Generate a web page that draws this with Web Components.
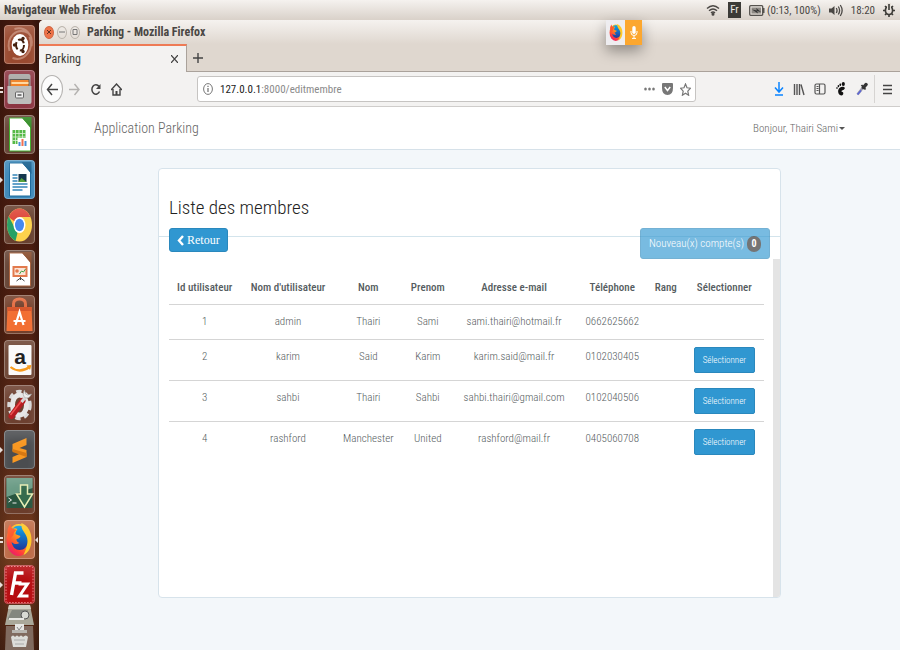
<!DOCTYPE html>
<html lang="fr">
<head>
<meta charset="utf-8">
<title>Parking</title>
<style>
  html, body { margin: 0; height: 100%; }
  body { font-family: "Roboto Condensed", Lato, "Liberation Sans", sans-serif; font-size: 11px; color: #636b6f; }
</style>
</head>
<body>
<desktop-shell>
  <top-panel slot="panel" app="Navigateur Web Firefox"></top-panel>
  <app-launcher slot="launcher"></app-launcher>
  <browser-window caption="Parking - Mozilla Firefox">
    <browser-tabs slot="chrome" label="Parking"></browser-tabs>
    <browser-toolbar slot="chrome"></browser-toolbar>
    <page-navbar brand="Application Parking">Bonjour, Thairi Sami</page-navbar>
    <page-card>
      <span slot="title">Liste des membres</span>
      <back-button slot="actions">Retour</back-button>
      <pending-button slot="actions" count="0">Nouveau(x) compte(s)</pending-button>
      <members-table></members-table>
    </page-card>
  </browser-window>
  <recording-badge slot="overlay"></recording-badge>
</desktop-shell>

<script>
const define = (name, html, setup) => customElements.define(name, class extends HTMLElement {
  connectedCallback() {
    if (this.shadowRoot) return;
    const root = this.attachShadow({ mode: 'open' });
    root.innerHTML = '<style>*{box-sizing:border-box}button{font:inherit;color:inherit;border:0;background:none;padding:0;margin:0;cursor:pointer}a{color:inherit;text-decoration:none}svg{display:block;flex:none}</style>' + html;
    if (setup) setup(this, root);
  }
});

const firefox = `
  <defs>
    <linearGradient id="fo" x1=".8" y1="0" x2=".2" y2="1"><stop offset="0" stop-color="#ffe226"/><stop offset=".4" stop-color="#ff9a1f"/><stop offset=".75" stop-color="#ff3d3a"/><stop offset="1" stop-color="#e5137a"/></linearGradient>
    <linearGradient id="fb" x1="0" y1="0" x2="0" y2="1"><stop offset="0" stop-color="#0aa5ea"/><stop offset="1" stop-color="#20389a"/></linearGradient>
  </defs>
  <ellipse cx="14" cy="20" rx="12" ry="16" fill="url(#fo)"/>
  <path d="M17 3c7 3 10 9 10 17 0 7-3 13-8 15 4-8 5-14 1-20-3-4-4-7-3-12z" fill="#ffc928"/>
  <path d="M8 9c2-3 5-4 9-3 0 5 6 8 6 15 0 6-3 9-8 9-4 0-7-3-8-8 2 2 5 3 8 1-3-1-3-3-3-4 2 0 3-1 4-3-2-1-4-1-5-2 0-2 1-4 2-5-2-1-3-1-5 0z" fill="url(#fb)"/>
  <path d="M3 11c0-3 2-6 3-7 0 3 1 4 3 5l3 1c-2 1-3 3-3 5l-5 6z" fill="#ff5a2e"/>`;

define('desktop-shell', `
  <style>
    :host { display: grid; grid-template: auto 1fr / auto 1fr; min-height: 100vh; position: relative; background: #43190d; }
    ::slotted([slot=panel]) { grid-column: 1 / -1; }
  </style>
  <slot name="panel"></slot><slot name="launcher"></slot><slot></slot><slot name="overlay"></slot>`);

define('top-panel', `
  <style>
    :host { display: flex; align-items: center; height: 20px; padding: 0 5px 0 4px; background: linear-gradient(#f5f2ef, #d9d1c9); color: #4a4744; font-size: 12px; }
    b { flex: 1; }
    .status { display: flex; align-items: center; gap: 8px; font-size: 11px; }
    .battery { display: flex; align-items: center; gap: 2px; }
    .lang { background: #3c3b37; color: #efebe6; width: 13px; height: 16px; line-height: 16px; text-align: center; }
  </style>
  <b></b>
  <div class="status">
    <svg width="14" height="12" viewBox="0 0 14 12" fill="none" stroke="#4a4744" stroke-width="1.400"><path d="M1 4.500Q7-1 13 4.500M3 6.800Q7 3 11 6.800M5 9Q7 7 9 9"/><circle cx="7" cy="10.300" r=".8" fill="#4a4744"/></svg>
    <span class="lang">Fr</span>
    <span class="battery">
      <svg width="16" height="11" viewBox="0 0 16 11"><rect x=".7" y=".7" width="13" height="9.600" rx="1" fill="none" stroke="#55524e" stroke-width="1.300"/><rect x="2.500" y="2.500" width="9.500" height="6" fill="#8d8984"/><path d="M14.500 3v5" stroke="#55524e" stroke-width="2"/><path d="M3 4.500l5 1-1-2.500 5 4-4-1 1 2.500z" fill="#333"/></svg>
      <span>(0:13, 100%)</span>
    </span>
    <svg width="14" height="13" viewBox="0 0 14 13" fill="none" stroke="#4a4744" stroke-width="1.300"><path d="M0 4.500h2.500L5.500 2v9l-3-2.500H0z" fill="#4a4744" stroke="none"/><path d="M7.300 4q1.500 2.500 0 5M9.300 2.500q2.600 4 0 8M11.300 1q3.700 5.500 0 11"/></svg>
    <span>18:20</span>
    <svg width="12" height="14" viewBox="0 0 12 14"><ellipse cx="6" cy="7.500" rx="3.600" ry="4" fill="none" stroke="#3c3b37" stroke-width="1.700"/><path d="M0 7.500h2M10 7.500h2M2 3l1.500 1.500M10 3L8.500 4.500M2 12l1.500-1.500M10 12l-1.500-1.500M6 11v3" stroke="#3c3b37" stroke-width="1.600"/><path d="M6 0v7" stroke="#e7e1da" stroke-width="4"/><path d="M6 1v6" stroke="#3c3b37" stroke-width="1.600"/></svg>
  </div>`, (el, r) => r.querySelector('b').textContent = el.getAttribute('app'));

const doc = (edge, fold) => `<path d="M5 3h13l8 9v24H5z" fill="#fff" stroke="${edge}" stroke-width="1"/><path d="M17 2h10v12z" fill="${fold}"/>`;
const apps = [
  ['Tableau de bord', '#9a4a30', `<path d="M5 26C1 12 12 2 24 8M25 12c5 13-5 25-17 21M10 4c11-3 19 6 17 17" fill="none" stroke="#d9a793" stroke-width="2" opacity=".6"/><ellipse cx="15.500" cy="20" rx="8.300" ry="11" fill="#fff"/><ellipse cx="15.500" cy="20" rx="4" ry="5.500" fill="none" stroke="#44200f" stroke-width="2" stroke-dasharray="7.500 2.500"/><circle cx="10" cy="20" r="1.700" fill="#44200f"/><circle cx="18.500" cy="13.500" r="1.700" fill="#44200f"/><circle cx="18.500" cy="26.500" r="1.700" fill="#44200f"/>`],
  ['Fichiers', '#8c3541', `<path d="M4 6q0-2 2-2h18q2 0 2 2v12H4z" fill="#a9a9a7"/><path d="M5 9h20v8H5z" fill="#59544f"/><path d="M6 10h18v6H6z" fill="#f08328"/><path d="M7 12h17v2H7z" fill="#ffd8a0"/><path d="M3 16h24v16q0 2-2 2H5q-2 0-2-2z" fill="#bdbdbb"/><rect x="11" y="22" width="8" height="6" rx="1" fill="#eee" stroke="#666"/><path d="M13 25h4" stroke="#555" stroke-width="1.500"/>`, 2],
  ['Calc', '#654334', doc('#3fae2a', '#2f8a22') + `<path d="M8 15h13v14H8z" fill="#56b947"/><path d="M8 18.500h13M8 22h13M8 25.500h13M11 15v14M14.500 15v14M18 15v14" stroke="#dff3d9" stroke-width=".8"/><path d="M13 23h10v8H13z" fill="#fff"/><path d="M14 31v-4h2v4z" fill="#4a90d9"/><path d="M17 31v-7h2v7z" fill="#f27052"/><path d="M20 31v-5h2v5z" fill="#4a90d9"/>`],
  ['Writer', '#3d88b8', doc('#1b6a9c', '#155e8d') + `<path d="M14 14h8v8h-8z" fill="#14374e"/><path d="M14 22l3-4 5 4z" fill="#57a33b"/><path d="M8 15h5M8 18h5M8 21h5M8 24h15M8 27h15M8 30h10" stroke="#3384b8" stroke-width="1.600"/>`, 1],
  ['Chrome', '#68402f', `<ellipse cx="15" cy="20" rx="12.500" ry="16.500" fill="#fdd24c"/><path d="M15 20L4 12Q8 3.500 15 3.500T26 12H15z" fill="#df4a3d"/><path d="M4 11l9 17-2 8Q2.500 31 2.500 20q0-5 1.500-9z" fill="#27a165"/><ellipse cx="15" cy="20" rx="6" ry="8" fill="#fff"/><ellipse cx="15" cy="20" rx="4.500" ry="6.200" fill="#4688ef"/>`],
  ['Impress', '#654334', doc('#a9623c', '#874b2b') + `<path d="M8 16h15v11H8z" fill="#e27a4d"/><path d="M10 18h11v7H10z" fill="#fbe5d8"/><circle cx="12.500" cy="21" r="1.800" fill="#e27a4d"/><path d="M15 24l2-3 2 1 2-3" stroke="#41a447" fill="none"/><path d="M16 27v3M12 31l4-3 4 3" stroke="#444" fill="none"/>`],
  ['Logithèque', '#73402c', `<path d="M9 13V9q0-5 6-5t6 5v4" fill="none" stroke="#e46b3f" stroke-width="3"/><path d="M3 12h24l1 24H2z" fill="#f26f33"/><path d="M3 12h24l.3 4H2.800z" fill="#d7552a"/><path d="M11 30l4-13 4 13M9 26h12" fill="none" stroke="#fff" stroke-width="2.200"/>`],
  ['Amazon', '#6d4433', `<rect x="4" y="5" width="23" height="30" rx="1" fill="#fafafa"/><text x="15.500" y="24" font-family="Liberation Sans, sans-serif" font-weight="700" font-size="21" fill="#222" text-anchor="middle">a</text><path d="M6 27q9 7 19 0" fill="none" stroke="#f79a1c" stroke-width="2.200"/><path d="M22 25.500l5-.5-1.500 5z" fill="#f79a1c"/>`],
  ['Paramètres', '#6d4030', `<ellipse cx="15" cy="20" rx="10" ry="13" fill="none" stroke="#d9d9d9" stroke-width="4.500" stroke-dasharray="5 3.500"/><ellipse cx="15" cy="20" rx="7" ry="10" fill="none" stroke="#e6e6e6" stroke-width="5"/><path d="M7 31l11-15" stroke="#b51d22" stroke-width="6" stroke-linecap="round"/><path d="M6 30l11-14" stroke="#ec5150" stroke-width="1.500"/><path d="M17 17l5-6" stroke="#d6d6d6" stroke-width="3"/><path d="M20 5q-3 5 1 8 4 1 6-4l-4 1-2-1z" fill="#eee" stroke="#999" stroke-width=".6"/>`],
  ['Sublime Text', '#4b4d50', `<path d="M8 14l14-6v7l-7 3 7 2v7L8 33v-6l7-3-7-3z" fill="#f89822"/><path d="M8 19l14 4v4l-14-5z" fill="#d67812"/>`, 1],
  ['Terminal', '#6b3d2b', `<path d="M2 3h26v30H2z" fill="#28553f"/><path d="M2 3h26v10L2 22z" fill="#6a9b85"/><path d="M16 10h7v9h5l-8 13-8-13h4z" fill="#356b4d" stroke="#e6edb4" stroke-width="1.500"/><path d="M4 23l3 2-3 2M8 28h4" fill="none" stroke="#eee"/>`],
  ['Firefox', '#bd6b47', firefox, 2, true],
  ['FileZilla', '#a90f12', `<rect x="1.500" y="1.500" width="27" height="36" rx="2" fill="#b60c10" stroke="#ef7d7d" stroke-width="1" stroke-dasharray="1.500 1.500"/><path d="M7 30l4-22h8M9 18h8" fill="none" stroke="#fff" stroke-width="3.400"/><path d="M14 19h9l-8 12h9" fill="none" stroke="#fff" stroke-width="3"/>`, 1]
];

define('launcher-item', `
  <style>
    :host { display: flex; align-items: center; height: 39px; width: 39px; }
    .mark { width: 4px; display: grid; gap: 2px; }
    .mark i { width: 3px; height: 2px; background: #e9e0dc; }
    .mark.one i { width: 0; height: 0; background: none; border: 3px solid transparent; border-left-color: #e9e0dc; border-right: 0; }
    button { position: relative; width: 31px; height: 39px; border-radius: 4px; overflow: hidden; }
    button::after { content: ""; position: absolute; inset: 0; border-radius: 4px; box-shadow: inset 0 0 0 1px #ffffff44, inset 0 8px 10px #ffffff22; }
    .active { border: 3px solid transparent; border-right-color: #e9e0dc; border-left: 0; }
  </style>
  <span class="mark"></span><button></button>`, (el, r) => {
    const [label, bg, art, marks = 0, active] = apps[+el.getAttribute('index')];
    const b = r.querySelector('button');
    b.setAttribute('aria-label', label);
    b.style.background = bg;
    b.innerHTML = `<svg width="31" height="39" viewBox="0 0 30 39" aria-hidden="true">${art}</svg>`;
    const m = r.querySelector('.mark');
    m.innerHTML = '<i></i>'.repeat(marks);
    if (marks === 1) m.classList.add('one');
    if (active) b.insertAdjacentHTML('afterend', '<i class="active"></i>');
  });

define('app-launcher', `
  <style>
    :host { display: block; width: 39px; height: calc(100vh - 20px); overflow: hidden; background: linear-gradient(90deg, #00000025, transparent 30%, transparent 80%, #00000040), linear-gradient(#42180e, #4d1e10 45%, #5b2a18 70%, #733c1e 85%, #4a2213); }
    .items { display: grid; gap: 6px; padding-top: 5px; }
    .stack { display: grid; padding: 0 0 0 4px; }
  </style>
  <div class="items"></div>
  <div class="stack">
    <svg width="31" height="46" viewBox="0 0 31 46"><path d="M5 1h21l4 20H1z" fill="#aaa89a"/><path d="M5 1h21l1 4H4z" fill="#d2d0c4"/><path d="M4 14L8 6h16l-2 9H4z" fill="#84877f"/><ellipse cx="21" cy="11" rx="4" ry="4" fill="#d8dad4" stroke="#555"/><path d="M5 15h15" stroke="#e8e8e4" stroke-width="2"/><path d="M2 22h27l1 24H1z" fill="#806a5f"/><path d="M11 20h9v9h-9z" fill="#e6e6e4"/><path d="M13 23l2 3 3-4" stroke="#888" fill="none"/><path d="M8 26h15v3H8z" fill="#b9b6b1"/><path d="M7 33q2-3 4 0 2-3 4 0 2-3 4 0 3-3 5 0l-2 10H9z" fill="#dcdcd9"/><path d="M10 36h11M11 40h9" stroke="#aaa"/></svg>
  </div>`, (el, r) => {
    r.querySelector('.items').innerHTML = apps.map((_, i) => `<launcher-item index="${i}"></launcher-item>`).join('');
  });

define('browser-window', `
  <style>
    :host { display: flex; flex-direction: column; min-width: 0; background: #f3f7fa; border-top-left-radius: 5px; overflow: hidden; }
    header { display: flex; align-items: center; gap: 3px; height: 24px; padding-left: 5px; background: linear-gradient(#f5f2ef, #dfd7cf); color: #4a4744; font-size: 12px; }
    b { padding-left: 4px; }
    button { width: 10px; height: 13px; border-radius: 50%; border: 1px solid #bab3ab; display: grid; place-items: center; color: #777; }
    .close { background: #ee7248; border-color: #cf6541; color: #63301f; }
    main { flex: 1; display: flex; flex-direction: column; }
  </style>
  <header>
    <button class="close" aria-label="Fermer"><svg width="6" height="6" viewBox="0 0 6 6" stroke="currentColor"><path d="M1 1l4 4M5 1L1 5"/></svg></button>
    <button aria-label="Réduire"><svg width="6" height="6" viewBox="0 0 6 6" stroke="currentColor"><path d="M0 3h6"/></svg></button>
    <button aria-label="Agrandir"><svg width="6" height="6" viewBox="0 0 6 6" stroke="currentColor" fill="none"><path d="M1 .5h4v5H1z"/></svg></button>
    <b></b>
  </header>
  <slot name="chrome"></slot>
  <main><slot></slot></main>`, (el, r) => r.querySelector('b').textContent = el.getAttribute('caption'));

define('browser-tabs', `
  <style>
    :host { display: flex; height: 28px; background: #dfd7cf; color: #3c3b37; font-size: 12px; box-shadow: inset 0 -1px #aaa29b; }
    .tab { display: flex; align-items: center; justify-content: space-between; width: 148px; padding: 0 8px 0 6px; background: #f3f2f1; border-top: 2px solid #ee7a55; border-right: 1px solid #aaa29b; }
    .new { padding: 0 6px; }
  </style>
  <div class="tab"><span></span><button aria-label="Fermer l’onglet"><svg width="7" height="8" viewBox="0 0 7 8" stroke="#444" stroke-width="1.200"><path d="M0 0l7 8M7 0L0 8"/></svg></button></div>
  <button class="new" aria-label="Nouvel onglet"><svg width="10" height="12" viewBox="0 0 10 12" stroke="#444" stroke-width="1.400"><path d="M5 1v10M0 6h10"/></svg></button>`,
  (el, r) => r.querySelector('span').textContent = el.getAttribute('label'));

define('browser-toolbar', `
  <style>
    :host { display: flex; align-items: center; height: 35px; padding: 0 8px 0 2px; background: #f3f2f1; border-bottom: 1px solid #cfcdcb; box-sizing: border-box; }
    .nav, .tools, .actions { display: flex; align-items: center; }
    .nav { gap: 10px; flex: 0 0 156px; }
    .nav .back { width: 22px; height: 28px; border: 1px solid #b5b3b1; border-radius: 50%; background: #fcfcfc; display: grid; place-items: center; margin-right: -4px; }
    .url { display: flex; align-items: center; gap: 7px; flex: 0 1 499px; height: 26px; padding: 0 4px 0 5px; background: #fff; border: 1px solid #c6c4c2; border-radius: 3px; }
    .address { flex: 1; color: #8a8a8a; font-size: 11px; outline: 0; white-space: nowrap; }
    .address b { color: #222; font-weight: 400; }
    .actions { gap: 7px; }
    .tools { gap: 9px; margin-left: auto; }
    .menu { margin-left: -3px; padding-left: 8px; border-left: 1px solid #d6d4d2; height: 28px; }
  </style>
  <div class="nav">
    <button class="back" aria-label="Précédent"><svg width="12" height="13" viewBox="0 0 12 13" fill="none" stroke="#444" stroke-width="1.500"><path d="M12 6.500H1.500M6 1L1.500 6.500 6 12"/></svg></button>
    <button aria-label="Suivant"><svg width="11" height="13" viewBox="0 0 11 13" fill="none" stroke="#b4b2b0" stroke-width="1.400"><path d="M0 6.500h10M5.500 1L10 6.500 5.500 12"/></svg></button>
    <button aria-label="Actualiser"><svg width="11" height="13" viewBox="0 0 11 13" fill="none" stroke="#444" stroke-width="1.500"><path d="M9 3.500A4 4.700 0 1 0 9.500 8.500"/><path d="M10.500 1v5H6z" fill="#444" stroke="none"/></svg></button>
    <button aria-label="Accueil"><svg width="11" height="13" viewBox="0 0 11 13" fill="none" stroke="#444" stroke-width="1.400"><path d="M0 7l5.500-6L11 7M2 6v6h7V6"/><path d="M4.500 8h2v4h-2z" fill="#444" stroke="none"/></svg></button>
  </div>
  <div class="url">
    <svg width="10" height="12" viewBox="0 0 10 12" fill="none" stroke="#777"><ellipse cx="5" cy="6" rx="4.400" ry="5.400"/><path d="M5 5v4M5 2.800v1.200" stroke-width="1.300"/></svg>
    <span class="address" role="textbox" tabindex="0" aria-label="Adresse"><b>127.0.0.1</b>:8000/editmembre</span>
    <div class="actions">
      <button aria-label="Actions"><svg width="11" height="4" viewBox="0 0 11 4" fill="#777"><ellipse cx="1.500" cy="2" rx="1.300" ry="1.500"/><ellipse cx="5.500" cy="2" rx="1.300" ry="1.500"/><ellipse cx="9.500" cy="2" rx="1.300" ry="1.500"/></svg></button>
      <button aria-label="Pocket"><svg width="11" height="12" viewBox="0 0 11 12"><path d="M1 0h9q1 0 1 1v4q0 7-5.500 7T0 5V1q0-1 1-1z" fill="#777"/><path d="M2.800 4l2.700 3.500L8.200 4" fill="none" stroke="#fff" stroke-width="1.500"/></svg></button>
      <button aria-label="Marque-page"><svg width="11" height="13" viewBox="0 0 11 13" fill="none" stroke="#777" stroke-width="1.200"><path d="M5.500 1L7 4.800l3.500.4-2.700 3 .8 4-3.100-2-3.100 2 .8-4-2.700-3 3.500-.4z"/></svg></button>
    </div>
  </div>
  <div class="tools">
    <button aria-label="Téléchargements"><svg width="10" height="14" viewBox="0 0 10 14" fill="none" stroke="#0a84ff" stroke-width="1.500"><path d="M5 0v9.500M1 5.500L5 10l4-4.500M1 13h8"/></svg></button>
    <button aria-label="Bibliothèque"><svg width="12" height="13" viewBox="0 0 12 13" stroke="#555" stroke-width="1.400"><path d="M1.500 1v11M4 1v11M6.500 1v11M8 1.500l3 10.500"/></svg></button>
    <button aria-label="Panneaux latéraux"><svg width="12" height="12" viewBox="0 0 12 12" fill="none" stroke="#555" stroke-width="1.200"><rect x="1" y="1" width="10" height="10" rx="1.500"/><path d="M5.500 1v10M2.500 3.500h2M2.500 5.500h2M2.500 7.500h2"/></svg></button>
    <button aria-label="GNOME"><svg width="12" height="14" viewBox="0 0 12 14" fill="#111"><ellipse cx="8.300" cy="2" rx="1.600" ry="2"/><ellipse cx="5.300" cy="2.800" rx=".9" ry="1.300"/><ellipse cx="3.400" cy="4.200" rx=".8" ry="1.100"/><ellipse cx="2" cy="6" rx=".7" ry="1"/><path d="M9 5c2 1 0 3-2 3.500-1 .5-.5 1.500.5 1.500s1.500 3-1 3.500c-3 0-4-4-3-6C4.500 5 7 4.200 9 5z"/></svg></button>
    <button aria-label="Pipette"><svg width="12" height="14" viewBox="0 0 12 14"><path d="M1.500 12.500L7 5.500" stroke="#99a" stroke-width="2.600"/><path d="M1.500 12.500L5 8.500" stroke="#5963d8" stroke-width="1.500"/><path d="M5.500 3l4 4.500" stroke="#333" stroke-width="1.800"/><path d="M7.500 5.500L10 2.500" stroke="#333" stroke-width="3.500" stroke-linecap="round"/></svg></button>
    <button class="menu" aria-label="Menu"><svg width="9" height="11" viewBox="0 0 9 11" stroke="#444" stroke-width="1.400"><path d="M0 1.500h9M0 5.500h9M0 9.500h9"/></svg></button>
  </div>`);

define('page-navbar', `
  <style>
    :host { display: flex; align-items: center; justify-content: space-between; height: 43px; padding: 0 55px; background: #fff; border-bottom: 1px solid #d6e1e9; box-sizing: border-box; color: #666; font-weight: 300; }
    .brand { font-size: 14px; }
    .user { display: flex; align-items: center; gap: 1px; font-size: 11px; }
    .user::after { content: ""; border: 3px solid transparent; border-top-color: #555; border-bottom: 0; }
  </style>
  <a class="brand" href="#"></a>
  <a class="user" href="#"><slot></slot></a>`, (el, r) => r.querySelector('.brand').textContent = el.getAttribute('brand'));

define('page-card', `
  <style>
    :host { flex: 1; display: flex; flex-direction: column; box-sizing: border-box; width: calc(100% - 40px); max-width: 623px; margin: 18px auto 52px; background: #fff; border: 1px solid #d7e3eb; border-radius: 4px; overflow: hidden; }
    h1 { margin: 0; padding: 27px 10px 16px; border-bottom: 1px solid #d3e4ec; font-size: 19px; line-height: 24px; font-weight: 300; color: #222; }
    .actions { display: flex; justify-content: space-between; align-items: flex-start; padding: 0 10px; margin-top: -9px; }
    .body { flex: 1; display: flex; }
    .content { flex: 1; min-width: 0; padding: 9px 9px 0 10px; }
    .track { width: 7px; background: #e4e4e4; }
  </style>
  <h1><slot name="title"></slot></h1>
  <div class="actions"><slot name="actions"></slot></div>
  <div class="body"><div class="content"><slot></slot></div><div class="track"></div></div>`);

define('back-button', `
  <style>
    :host { display: block; }
    button { display: flex; align-items: center; gap: 3px; height: 24px; padding: 0 7px; border: 1px solid #2a88bd; border-radius: 3px; background: #3097d1; color: #fff; font: 12px "Liberation Serif", serif; }
  </style>
  <button><svg width="7" height="11" viewBox="0 0 7 11" fill="none" stroke="#fff" stroke-width="2.400"><path d="M6 1L2 5.500 6 10"/></svg><slot></slot></button>`);

define('pending-button', `
  <style>
    :host { display: block; }
    button { display: flex; align-items: center; gap: 3px; height: 31px; padding: 0 8px; border: 1px solid #2a88bd; border-radius: 3px; background: #3097d1; color: #fff; opacity: .65; font-size: 11px; font-weight: 300; }
    .badge { width: 14px; height: 16px; line-height: 16px; border-radius: 8px; background: #2b2b2b; font-size: 10px; font-weight: 700; }
  </style>
  <button disabled><slot></slot><span class="badge"></span></button>`, (el, r) => r.querySelector('.badge').textContent = el.getAttribute('count'));

define('select-button', `
  <style>
    :host { display: block; }
    button { width: 61px; height: 26px; border: 1px solid #2a88bd; border-radius: 2px; background: #3097d1; color: #fff; font-size: 9px; font-weight: 300; }
  </style>
  <button><slot></slot></button>`);

define('members-table', `
  <style>
    :host { display: block; color: #555c60; }
    table { width: 100%; border-collapse: collapse; table-layout: fixed; font-size: 11px; line-height: 16px; text-align: center; }
    th, td { padding: 9px 0; vertical-align: top; font-weight: 300; }
    th { padding: 12px 0 8px; font-weight: 500; }
    td { border-top: 1px solid #d5d5d5; }
    td:last-child { padding: 7px 0; }
    th:last-child, td:last-child { padding-left: 4px; }
    select-button { display: grid; justify-content: center; }
  </style>
  <table>
    <colgroup><col style="width:12%"><col style="width:16%"><col style="width:11%"><col style="width:9%"><col style="width:20%"><col style="width:13%"><col style="width:5%"><col style="width:14%"></colgroup>
    <thead><tr><th>Id utilisateur</th><th>Nom d'utilisateur</th><th>Nom</th><th>Prenom</th><th>Adresse e-mail</th><th>Téléphone</th><th>Rang</th><th>Sélectionner</th></tr></thead>
    <tbody></tbody>
  </table>`, (el, r) => {
    const rows = [
      ['1', 'admin', 'Thairi', 'Sami', 'sami.thairi@hotmail.fr', '0662625662', '', ''],
      ['2', 'karim', 'Said', 'Karim', 'karim.said@mail.fr', '0102030405', '', 'Sélectionner'],
      ['3', 'sahbi', 'Thairi', 'Sahbi', 'sahbi.thairi@gmail.com', '0102040506', '', 'Sélectionner'],
      ['4', 'rashford', 'Manchester', 'United', 'rashford@mail.fr', '0405060708', '', 'Sélectionner']
    ];
    r.querySelector('tbody').innerHTML = rows.map(row => '<tr>' + row.map((v, i) =>
      `<td>${i === 7 && v ? `<select-button>${v}</select-button>` : v}</td>`).join('') + '</tr>').join('');
  });

define('recording-badge', `
  <style>
    :host { position: absolute; top: 20px; left: 606px; display: flex; box-shadow: 0 6px 14px #0000005c; }
    span { display: grid; place-items: center; width: 19px; height: 25px; background: #eeedf0; }
    .mic { width: 17px; background: #fca72f; }
  </style>
  <span><svg width="14" height="17" viewBox="1 3 27 33">${firefox}</svg></span>
  <span class="mic"><svg width="8" height="13" viewBox="0 0 8 13"><rect x="2.300" y="0" width="3.400" height="8" rx="1.700" fill="#fff"/><path d="M1 5v1.500Q1 9.500 4 9.500T7 6.500V5M4 9.500V12M2 12.400h4" fill="none" stroke="#fff"/></svg></span>`);
</script>
</body>
</html>
